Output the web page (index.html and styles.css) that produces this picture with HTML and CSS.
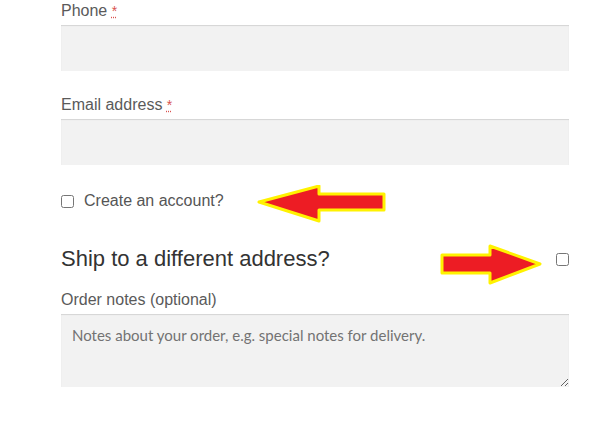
FILE: index.html
```html
<!DOCTYPE html>
<html lang="en">
<head>
    <meta charset="UTF-8">
    <title>Checkout</title>
    <link rel="stylesheet" href="styles.css">
</head>
<body>
    <form class="checkout-form">
        <div class="form-row">
            <label class="field-label" for="billing-phone">Phone <abbr class="required" title="required">*</abbr></label>
            <input class="input-text" type="tel" id="billing-phone">
        </div>

        <div class="form-row">
            <label class="field-label" for="billing-email">Email address <abbr class="required" title="required">*</abbr></label>
            <input class="input-text" type="email" id="billing-email">
        </div>

        <div class="create-account">
            <label class="checkbox-label">
                <input type="checkbox" class="checkbox">
                <span>Create an account?</span>
            </label>
            <!-- annotation arrow -->
            <svg class="arrow arrow-left" width="130" height="40" viewBox="0 0 130 40">
                <polygon points="2,17 62,1 62,9 127,9 127,25 62,25 62,36" />
            </svg>
        </div>

        <div class="ship-different">
            <h3 class="ship-title">Ship to a different address?</h3>
            <input type="checkbox" class="checkbox">
            <svg class="arrow arrow-right" width="104" height="42" viewBox="0 0 104 42">
                <polygon points="2,11 50,11 50,2 100,20 50,39 50,29 2,29" />
            </svg>
        </div>

        <div class="form-row notes-row">
            <label class="field-label notes-label" for="order-comments">Order notes (optional)</label>
            <textarea class="input-text notes" id="order-comments" placeholder="Notes about your order, e.g. special notes for delivery."></textarea>
        </div>
    </form>
</body>
</html>
```

FILE: styles.css
```css
body {
    margin: 0;
    background-color: #ffffff;
    font-family: "Liberation Sans", Arial, sans-serif;
    color: #555;
}
.checkout-form {
    width: 508px;
    margin-left: 61px;
    padding-top: 1px;
}
.form-row {
    display: flex;
    flex-direction: column;
    margin-bottom: 24px;
}
.field-label {
    font-size: 16px;
    line-height: 20px;
    color: #5a5a5a;
    margin-bottom: 4px;
}
.required {
    color: #d9534f;
    text-decoration: underline dotted;
    font-size: 14px;
}
.input-text {
    display: block;
    box-sizing: border-box;
    width: 100%;
    height: 46px;
    border: 0;
    background-color: #f2f2f2;
    box-shadow: inset 0 1px 1px rgba(0, 0, 0, 0.125);
    margin: 0;
    padding: 8px 10px;
    font-size: 15px;
    outline: none;
}
.create-account {
    position: relative;
    height: 24px;
    margin-top: 1px;
    display: flex;
    align-items: center;
}
.checkbox-label {
    display: flex;
    align-items: center;
    gap: 10px;
    font-size: 16px;
    color: #555;
}
.checkbox {
    width: 13px;
    height: 13px;
    margin: 0;
}
.arrow {
    position: absolute;
}
.arrow polygon {
    fill: #ed1c24;
    stroke: #fff200;
    stroke-width: 3;
    stroke-linejoin: round;
}
.arrow-left {
    left: 196px;
    top: -4px;
}
.ship-different {
    position: relative;
    display: flex;
    align-items: center;
    justify-content: space-between;
    margin-top: 30px;
    height: 32px;
}
.ship-title {
    margin: 0;
    font-size: 22px;
    font-weight: 400;
    line-height: 32px;
    color: #333;
}
.arrow-right {
    left: 379px;
    top: 1px;
}
.notes-row {
    margin-top: 15px;
}
.notes-label {
    margin-bottom: 4px;
}
.notes {
    height: 73px;
    padding: 11px 11px;
    font-family: Lato, "Open Sans", sans-serif;
    font-size: 15px;
    line-height: 20px;
    resize: vertical;
}
.notes::placeholder {
    color: #737373;
}
```
